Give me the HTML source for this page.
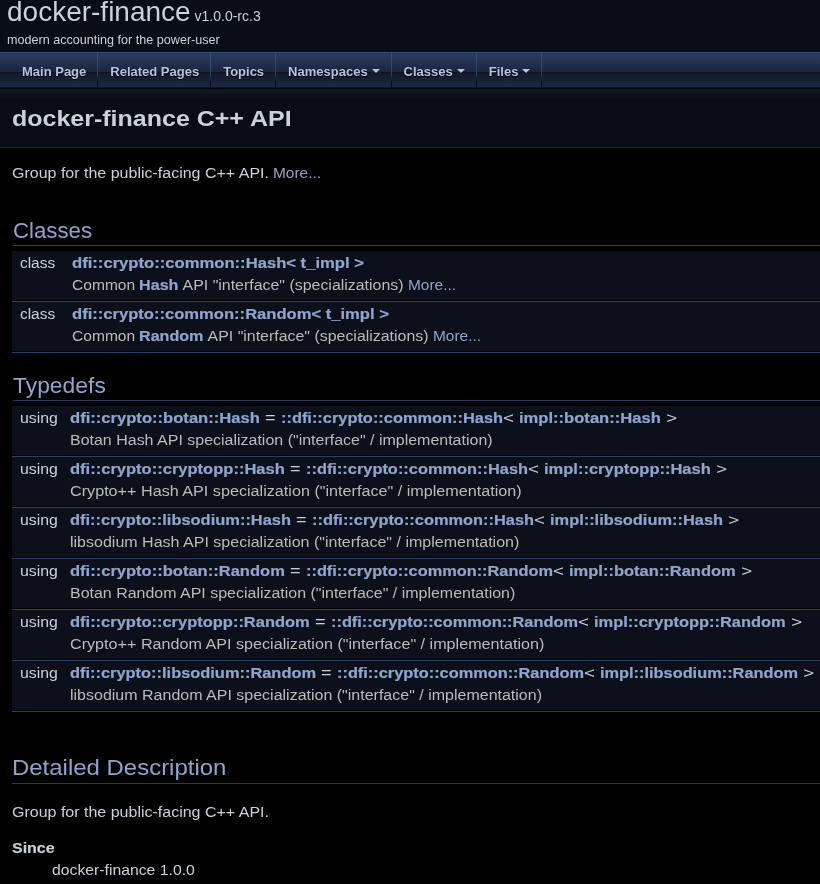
<!DOCTYPE html>
<html><head>
<meta charset="utf-8">
<title>docker-finance: docker-finance C++ API</title>
<style>
:root{--bf:"Liberation Sans", sans-serif;--tf:"Liberation Sans", sans-serif;--s14:14.7px;--s21:22.05px;}
html,body{margin:0;padding:0;}
#titlearea,#main-nav ul,.header .title,.contents{will-change:transform;}
body{background:#000;color:#C9D1D9;font:400 var(--s14)/22px var(--bf);overflow:hidden;width:820px;height:884px;position:relative;}
a{color:#90A5CE;text-decoration:none;}
a.el{font-weight:bold;-webkit-text-stroke:0.2px #90A5CE;}
.w{display:inline-block;white-space:pre;vertical-align:baseline;text-align:left;}
.s{display:inline-block;white-space:pre;transform-origin:0 0;}
#titlearea{position:absolute;left:0;top:0;width:820px;height:52px;background:#090D16;}
#projectname{position:absolute;left:7px;top:-6px;font:400 28px/36px var(--tf);color:#C9D1D9;white-space:nowrap;}
#projectnumber{font-size:14px;}
#projectbrief{position:absolute;left:7px;top:32px;font:400 12.6px/16px var(--tf);color:#C9D1D9;white-space:nowrap;}
#main-nav{position:absolute;left:0;top:52px;width:820px;height:37px;background:linear-gradient(#3a5282 0px,#3a5282 1px,#22314f 1px,#22314f 2px,#2a3b5e 2px,#283858 6px,#1a243b 20px,#0f141e 20px,#0f141e 21px,#121927 21px,#1c2945 34px,#1e2c4a 35px,#0c111c 35px,#0c111c 36px,#04060a 36px,#04060a 37px);}
#main-nav ul{margin:0;padding:0 10px;list-style:none;display:flex;}
#main-nav li{position:relative;}
#main-nav a{display:block;padding:2px 12px 0 12px;height:34px;font:bold 13px/36px var(--tf);color:#B6C4DF;text-shadow:0 1px 1px #000;white-space:nowrap;}
#main-nav a.has-sub{padding-right:24px;}
#main-nav li::after{content:"";position:absolute;right:0;top:1px;width:1px;height:35px;background:linear-gradient(#3a5180 0%,#2d426c 60%,#0a0f1a 82%,#05080e 100%);}
.caret{position:absolute;right:12px;top:17px;width:0;height:0;border-left:4px solid transparent;border-right:4px solid transparent;border-top:4px solid #B6C4DF;}
.header{position:absolute;left:0;top:89px;width:820px;height:59px;background:linear-gradient(#131a27 0px,#0a0d15 10px,#090C14 12px);border-bottom:1px solid #1a2336;box-sizing:border-box;}
.title{position:absolute;left:12px;top:16px;font:bold var(--s21)/28px var(--bf);color:#C9D1D9;white-space:nowrap;}
.contents{position:absolute;left:0;top:148px;width:820px;margin:0;padding:0 0 0 12px;box-sizing:border-box;}
.contents p{margin:14px 0;white-space:nowrap;}
table.memberdecls{border-spacing:0;padding:0;width:812px;font:400 var(--s14)/22px var(--bf);}
table.memberdecls td{padding:1px;}
table.memberdecls td.memItemLeft,table.memberdecls td.memItemRight{padding:1px 0 0 8px;}
table.memberdecls td.mdescLeft,table.memberdecls td.mdescRight{padding:0 8px 4px 8px;}
h2.groupheader{border-bottom:1px solid #283A5D;color:#90A5CE;font-size:var(--s21);font-weight:normal;margin:12px 0 4px 0;padding-top:8px;padding-bottom:4px;line-height:22px;width:100%;white-space:nowrap;}
tr.heading h2 .hx{position:relative;top:1px;}
.memItemLeft,.memItemRight,.mdescLeft,.mdescRight{background-color:#0B101A;border:none;margin:4px;vertical-align:top;white-space:nowrap;}
.memItemLeft{text-align:right;}
.memItemRight{width:100%;}
.mdescLeft,.mdescRight{color:#BBB;}
.memSeparator{border-bottom:1px solid #2C3F65;line-height:1px;margin:0;padding:0!important;}
h2.groupheader.dd{margin:36.75px 0 17.43px 0;}
dl{padding:0;margin:14px 0;white-space:nowrap;}
dl.section dd{margin-left:40px;margin-bottom:6px;}
dl.section dt{font-weight:bold;-webkit-text-stroke:0.15px #C9D1D9;}
</style>
</head>
<body>
<div id="titlearea">
  <div id="projectname">docker-finance<span id="projectnumber">&nbsp;v1.0.0-rc.3</span></div>
  <div id="projectbrief">modern accounting for the power-user</div>
</div>
<div id="main-nav">
<ul>
<li><a href="#">Main&nbsp;Page</a></li>
<li><a href="#">Related&nbsp;Pages</a></li>
<li><a href="#">Topics</a></li>
<li><a class="has-sub" href="#">Namespaces<span class="caret"></span></a></li>
<li><a class="has-sub" href="#">Classes<span class="caret"></span></a></li>
<li><a class="has-sub" href="#">Files<span class="caret"></span></a></li>
</ul>
</div>
<div class="header"><div class="title"><span class="w" style="width: 279.64px;"><span class="s" style="transform: scaleX(1.1336);">docker-finance C++ API</span></span></div></div>
<div class="contents">
<p><span class="w" style="width: 261.42px;"><span class="s" style="transform: scaleX(1.0891);">Group for the public-facing C++ API. </span></span><a href="#details"><span class="w" style="width: 48.06px;"><span class="s" style="transform: scaleX(1.0513);">More...</span></span></a></p>
<table class="memberdecls">
<tbody><tr class="heading"><td colspan="2"><h2 class="groupheader"><span class="hx"><span class="w" style="width: 79.11px;"><span class="s" style="transform: scaleX(1.0088);">Classes</span></span></span></h2></td></tr>
<tr><td class="memItemLeft"><span class="w" style="width: 43.66px;"><span class="s" style="transform: scaleX(1.0488);">class &nbsp;</span></span></td><td class="memItemRight"><a class="el" href="#"><span class="w" style="width: 291.91px;"><span class="s" style="transform: scaleX(1.132);">dfi::crypto::common::Hash&lt; t_impl &gt;</span></span></a></td></tr>
<tr><td class="mdescLeft">&nbsp;</td><td class="mdescRight"><span class="w" style="width: 67.52px;"><span class="s" style="transform: scaleX(1.0604);">Common </span></span><a class="el" href="#"><span class="w" style="width: 39.47px;"><span class="s" style="transform: scaleX(1.0987);">Hash</span></span></a><span class="w" style="width: 228.98px;"><span class="s" style="transform: scaleX(1.0839);"> API "interface" (specializations) </span></span><a href="#"><span class="w" style="width: 48.06px;"><span class="s" style="transform: scaleX(1.0513);">More...</span></span></a></td></tr>
<tr><td class="memSeparator" colspan="2">&nbsp;</td></tr>
<tr><td class="memItemLeft"><span class="w" style="width: 43.66px;"><span class="s" style="transform: scaleX(1.0488);">class &nbsp;</span></span></td><td class="memItemRight"><a class="el" href="#"><span class="w" style="width: 316.86px;"><span class="s" style="transform: scaleX(1.1288);">dfi::crypto::common::Random&lt; t_impl &gt;</span></span></a></td></tr>
<tr><td class="mdescLeft">&nbsp;</td><td class="mdescRight"><span class="w" style="width: 67.52px;"><span class="s" style="transform: scaleX(1.0604);">Common </span></span><a class="el" href="#"><span class="w" style="width: 64.42px;"><span class="s" style="transform: scaleX(1.0965);">Random</span></span></a><span class="w" style="width: 228.98px;"><span class="s" style="transform: scaleX(1.0839);"> API "interface" (specializations) </span></span><a href="#"><span class="w" style="width: 48.06px;"><span class="s" style="transform: scaleX(1.0513);">More...</span></span></a></td></tr>
<tr><td class="memSeparator" colspan="2">&nbsp;</td></tr>
</tbody></table>
<table class="memberdecls">
<tbody><tr class="heading"><td colspan="2"><h2 class="groupheader"><span class="hx"><span class="w" style="width: 92.83px;"><span class="s" style="transform: scaleX(1.0375);">Typedefs</span></span></span></h2></td></tr>
<tr><td class="memItemLeft"><span class="w" style="width: 42.28px;"><span class="s" style="transform: scaleX(1.0785);">using&nbsp;</span></span></td><td class="memItemRight"><a class="el" href="#"><span class="w" style="width: 189.88px;"><span class="s" style="transform: scaleX(1.1297);">dfi::crypto::botan::Hash</span></span></a><span class="w" style="width: 20.64px;"><span class="s" style="transform: scaleX(1.2323);"> = </span></span><a class="el" href="#"><span class="w" style="width: 222px;"><span class="s" style="transform: scaleX(1.1151);">::dfi::crypto::common::Hash</span></span></a><span class="w" style="width: 16.19px;"><span class="s" style="transform: scaleX(1.2774);">&lt; </span></span><a class="el" href="#"><span class="w" style="width: 141.81px;"><span class="s" style="transform: scaleX(1.1286);">impl::botan::Hash</span></span></a><span class="w" style="width: 16.19px;"><span class="s" style="transform: scaleX(1.2774);"> &gt;</span></span></td></tr>
<tr><td class="mdescLeft">&nbsp;</td><td class="mdescRight"><span class="w" style="width: 422.61px;"><span class="s" style="transform: scaleX(1.088);">Botan Hash API specialization ("interface" / implementation)</span></span></td></tr>
<tr><td class="memSeparator" colspan="2">&nbsp;</td></tr>
<tr><td class="memItemLeft"><span class="w" style="width: 42.28px;"><span class="s" style="transform: scaleX(1.0785);">using&nbsp;</span></span></td><td class="memItemRight"><a class="el" href="#"><span class="w" style="width: 214.83px;"><span class="s" style="transform: scaleX(1.1251);">dfi::crypto::cryptopp::Hash</span></span></a><span class="w" style="width: 20.64px;"><span class="s" style="transform: scaleX(1.2323);"> = </span></span><a class="el" href="#"><span class="w" style="width: 222px;"><span class="s" style="transform: scaleX(1.1151);">::dfi::crypto::common::Hash</span></span></a><span class="w" style="width: 16.19px;"><span class="s" style="transform: scaleX(1.2774);">&lt; </span></span><a class="el" href="#"><span class="w" style="width: 166.78px;"><span class="s" style="transform: scaleX(1.123);">impl::cryptopp::Hash</span></span></a><span class="w" style="width: 16.19px;"><span class="s" style="transform: scaleX(1.2774);"> &gt;</span></span></td></tr>
<tr><td class="mdescLeft">&nbsp;</td><td class="mdescRight"><span class="w" style="width: 451.72px;"><span class="s" style="transform: scaleX(1.1005);">Crypto++ Hash API specialization ("interface" / implementation)</span></span></td></tr>
<tr><td class="memSeparator" colspan="2">&nbsp;</td></tr>
<tr><td class="memItemLeft"><span class="w" style="width: 42.28px;"><span class="s" style="transform: scaleX(1.0785);">using&nbsp;</span></span></td><td class="memItemRight"><a class="el" href="#"><span class="w" style="width: 221.06px;"><span class="s" style="transform: scaleX(1.1196);">dfi::crypto::libsodium::Hash</span></span></a><span class="w" style="width: 20.64px;"><span class="s" style="transform: scaleX(1.2323);"> = </span></span><a class="el" href="#"><span class="w" style="width: 222px;"><span class="s" style="transform: scaleX(1.1151);">::dfi::crypto::common::Hash</span></span></a><span class="w" style="width: 16.19px;"><span class="s" style="transform: scaleX(1.2774);">&lt; </span></span><a class="el" href="#"><span class="w" style="width: 173.02px;"><span class="s" style="transform: scaleX(1.116);">impl::libsodium::Hash</span></span></a><span class="w" style="width: 16.19px;"><span class="s" style="transform: scaleX(1.2774);"> &gt;</span></span></td></tr>
<tr><td class="mdescLeft">&nbsp;</td><td class="mdescRight"><span class="w" style="width: 449.31px;"><span class="s" style="transform: scaleX(1.0904);">libsodium Hash API specialization ("interface" / implementation)</span></span></td></tr>
<tr><td class="memSeparator" colspan="2">&nbsp;</td></tr>
<tr><td class="memItemLeft"><span class="w" style="width: 42.28px;"><span class="s" style="transform: scaleX(1.0785);">using&nbsp;</span></span></td><td class="memItemRight"><a class="el" href="#"><span class="w" style="width: 214.83px;"><span class="s" style="transform: scaleX(1.1253);">dfi::crypto::botan::Random</span></span></a><span class="w" style="width: 20.64px;"><span class="s" style="transform: scaleX(1.2323);"> = </span></span><a class="el" href="#"><span class="w" style="width: 246.95px;"><span class="s" style="transform: scaleX(1.1128);">::dfi::crypto::common::Random</span></span></a><span class="w" style="width: 16.19px;"><span class="s" style="transform: scaleX(1.2774);">&lt; </span></span><a class="el" href="#"><span class="w" style="width: 166.78px;"><span class="s" style="transform: scaleX(1.1232);">impl::botan::Random</span></span></a><span class="w" style="width: 16.19px;"><span class="s" style="transform: scaleX(1.2774);"> &gt;</span></span></td></tr>
<tr><td class="mdescLeft">&nbsp;</td><td class="mdescRight"><span class="w" style="width: 445.3px;"><span class="s" style="transform: scaleX(1.087);">Botan Random API specialization ("interface" / implementation)</span></span></td></tr>
<tr><td class="memSeparator" colspan="2">&nbsp;</td></tr>
<tr><td class="memItemLeft"><span class="w" style="width: 42.28px;"><span class="s" style="transform: scaleX(1.0785);">using&nbsp;</span></span></td><td class="memItemRight"><a class="el" href="#"><span class="w" style="width: 239.78px;"><span class="s" style="transform: scaleX(1.1217);">dfi::crypto::cryptopp::Random</span></span></a><span class="w" style="width: 20.64px;"><span class="s" style="transform: scaleX(1.2323);"> = </span></span><a class="el" href="#"><span class="w" style="width: 246.95px;"><span class="s" style="transform: scaleX(1.1128);">::dfi::crypto::common::Random</span></span></a><span class="w" style="width: 16.19px;"><span class="s" style="transform: scaleX(1.2774);">&lt; </span></span><a class="el" href="#"><span class="w" style="width: 191.73px;"><span class="s" style="transform: scaleX(1.119);">impl::cryptopp::Random</span></span></a><span class="w" style="width: 16.19px;"><span class="s" style="transform: scaleX(1.2774);"> &gt;</span></span></td></tr>
<tr><td class="mdescLeft">&nbsp;</td><td class="mdescRight"><span class="w" style="width: 474.41px;"><span class="s" style="transform: scaleX(1.099);">Crypto++ Random API specialization ("interface" / implementation)</span></span></td></tr>
<tr><td class="memSeparator" colspan="2">&nbsp;</td></tr>
<tr><td class="memItemLeft"><span class="w" style="width: 42.28px;"><span class="s" style="transform: scaleX(1.0785);">using&nbsp;</span></span></td><td class="memItemRight"><a class="el" href="#"><span class="w" style="width: 246.03px;"><span class="s" style="transform: scaleX(1.1168);">dfi::crypto::libsodium::Random</span></span></a><span class="w" style="width: 20.64px;"><span class="s" style="transform: scaleX(1.2323);"> = </span></span><a class="el" href="#"><span class="w" style="width: 246.95px;"><span class="s" style="transform: scaleX(1.1128);">::dfi::crypto::common::Random</span></span></a><span class="w" style="width: 16.19px;"><span class="s" style="transform: scaleX(1.2774);">&lt; </span></span><a class="el" href="#"><span class="w" style="width: 197.97px;"><span class="s" style="transform: scaleX(1.113);">impl::libsodium::Random</span></span></a><span class="w" style="width: 16.19px;"><span class="s" style="transform: scaleX(1.2774);"> &gt;</span></span></td></tr>
<tr><td class="mdescLeft">&nbsp;</td><td class="mdescRight"><span class="w" style="width: 472px;"><span class="s" style="transform: scaleX(1.0893);">libsodium Random API specialization ("interface" / implementation)</span></span></td></tr>
<tr><td class="memSeparator" colspan="2">&nbsp;</td></tr>
</tbody></table>
<h2 class="groupheader dd" id="details"><span class="w" style="width: 214.39px;"><span class="s" style="transform: scaleX(1.0866);">Detailed Description</span></span></h2>
<div class="textblock"><p><span class="w" style="width: 256.97px;"><span class="s" style="transform: scaleX(1.0891);">Group for the public-facing C++ API.</span></span></p>
<dl class="section since"><dt><span class="w" style="width: 42.66px;"><span class="s" style="transform: scaleX(1.0885);">Since</span></span></dt><dd><span class="w" style="width: 142.81px;"><span class="s" style="transform: scaleX(1.073);">docker-finance 1.0.0</span></span></dd></dl>
</div>
</div>


</body></html>
